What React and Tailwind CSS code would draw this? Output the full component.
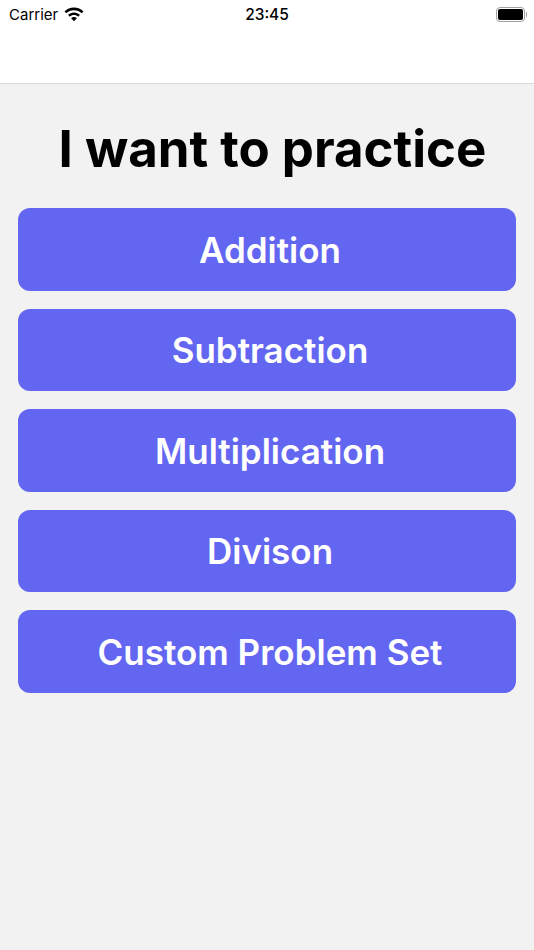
import React from 'react';

const topics = ['Addition', 'Subtraction', 'Multiplication', 'Divison', 'Custom Problem Set'];

const Wifi = () => (
  <svg width="20" height="15" viewBox="0 0 20 15" className="ml-[6px]">
    <path d="M10 0.6C6.3 0.6 3 2 0.5 4.4L2.3 6.3C4.3 4.4 7 3.2 10 3.2s5.7 1.2 7.7 3.1l1.8-1.9C17 2 13.7 0.6 10 0.6z" fill="#000" />
    <path d="M10 5.4C7.7 5.4 5.6 6.3 4 7.8l1.8 1.9C6.9 8.7 8.4 8 10 8s3.1 0.7 4.2 1.7L16 7.8C14.4 6.3 12.3 5.4 10 5.4z" fill="#000" />
    <path d="M10 10c-1.1 0-2.1 0.4-2.9 1.2L10 14.3l2.9-3.1C12.1 10.4 11.1 10 10 10z" fill="#000" />
  </svg>
);

const Battery = () => (
  <div className="flex items-center">
    <div className="w-[29px] h-[15px] rounded-[4px] border-[1.5px] border-[#a0a0a0] p-[1px]">
      <div className="w-full h-full rounded-[2px] bg-black" />
    </div>
    <div className="w-[1.5px] h-[5px] rounded-r-sm bg-[#a0a0a0] ml-[1px]" />
  </div>
);

const StatusBar = () => (
  <div className="relative flex items-center justify-between h-[27px] pl-[9px] pr-[7px] pt-[1px] font-['Inter',sans-serif] text-black">
    <div className="flex items-center">
      <span className="text-[15px] leading-none">Carrier</span>
      <Wifi />
    </div>
    <span className="absolute left-0 right-0 mt-[1px] text-center text-[15.5px] font-medium leading-none">23:45</span>
    <Battery />
  </div>
);

export default function App() {
  return (
    <div className="w-[534px] h-[950px] flex flex-col bg-[#f2f2f2] font-['Inter',sans-serif]">
      <header className="h-[84px] bg-white border-b border-[#d9d9d9]">
        <StatusBar />
      </header>
      <main className="flex flex-col px-[18px]">
        <h1 className="mt-[34px] mb-[28px] pl-[11px] text-center text-[51px] leading-[62px] font-bold text-black">
          I want to practice
        </h1>
        <div className="flex flex-col gap-[18px]">
          {topics.map((t) => (
            <button
              key={t}
              className="h-[82.6px] w-[498px] rounded-[12px] bg-[#6366f1] pl-[6px] pt-[1px] text-center text-[35px] font-semibold text-white"
            >
              {t}
            </button>
          ))}
        </div>
      </main>
    </div>
  );
}
